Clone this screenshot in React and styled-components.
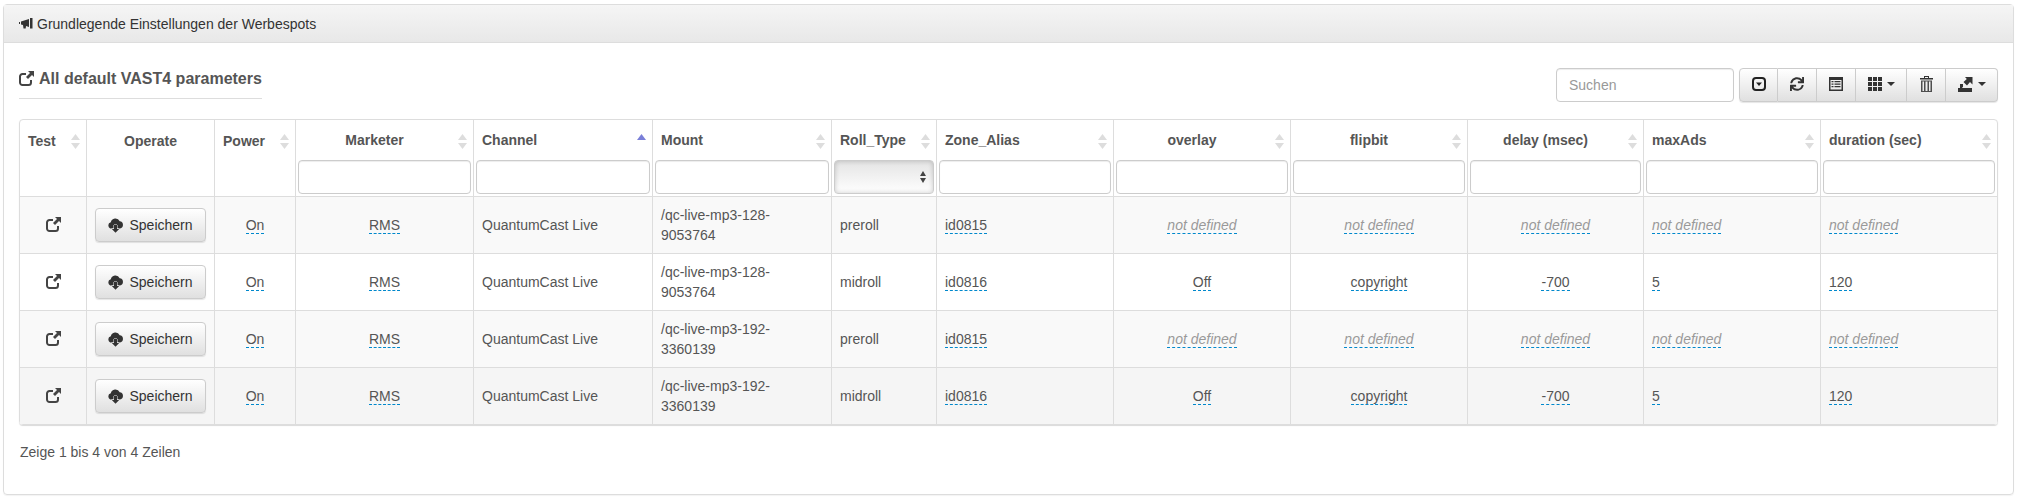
import React from "react"
import styled, { createGlobalStyle } from "styled-components"
import { FaSync } from "react-icons/fa"

const columns = [
	{ name: "Test", width: 66, sortable: true },
	{ name: "Operate", width: 128, center: true },
	{ name: "Power", width: 81, sortable: true },
	{ name: "Marketer", width: 178, center: true, sortable: true, filter: "text" },
	{ name: "Channel", width: 179, sortable: true, sorted: true, filter: "text" },
	{ name: "Mount", width: 179, sortable: true, filter: "text" },
	{ name: "Roll_Type", width: 105, sortable: true, filter: "select" },
	{ name: "Zone_Alias", width: 177, sortable: true, filter: "text" },
	{ name: "overlay", width: 177, center: true, sortable: true, filter: "text" },
	{ name: "flipbit", width: 177, center: true, sortable: true, filter: "text" },
	{ name: "delay (msec)", width: 176, center: true, sortable: true, filter: "text" },
	{ name: "maxAds", width: 177, sortable: true, filter: "text" },
	{ name: "duration (sec)", width: 177, sortable: true, filter: "text" },
]

const rows = [
	{ mount: ["/qc-live-mp3-128-", "9053764"], roll: "preroll", zone: "id0815" },
	{ mount: ["/qc-live-mp3-128-", "9053764"], roll: "midroll", zone: "id0816", overlay: "Off", flipbit: "copyright", delay: "-700", maxAds: "5", duration: "120" },
	{ mount: ["/qc-live-mp3-192-", "3360139"], roll: "preroll", zone: "id0815" },
	{ mount: ["/qc-live-mp3-192-", "3360139"], roll: "midroll", zone: "id0816", overlay: "Off", flipbit: "copyright", delay: "-700", maxAds: "5", duration: "120" },
]

function Editable({ value }) {
	if (value) return <EditLink>{value}</EditLink>
	return <EditLink $empty>not defined</EditLink>
}

function SortIcon({ active }) {
	return (
		<SortMark width="9" height="15" viewBox="0 0 9 15">
			<path d="M4.5 0 L9 6 H0 Z" fill={active ? "#7a7fd8" : "#ddd"} />
			{!active && <path d="M4.5 15 L9 9 H0 Z" fill="#ddd" />}
		</SortMark>
	)
}

// the icons below are drawn by hand, the packages only have the newer shapes
function BullhornIcon() {
	return (
		<svg width="14" height="11" viewBox="0 0 14 11" fill="#333">
			<path d="M0 4h1v2H0zM2 3.500 10 1v8L7 8.100 6.700 10.500H4.500L4 7 2 6.500z" />
			<rect x="11" y="0" width="2.500" height="10.500" />
		</svg>
	)
}

function ShareIcon() {
	return (
		<svg width="15" height="15" viewBox="0 0 15 15">
			<path d="M7 3H3.500A2.500 2.500 0 0 0 1 5.500v6A2.500 2.500 0 0 0 3.500 14h6a2.500 2.500 0 0 0 2.500-2.500V9" fill="none" stroke="#444" strokeWidth="2" />
			<path d="M9 0h6v6l-2-2-4 4-2-2 4-4z" fill="#444" />
		</svg>
	)
}

function CloudIcon() {
	return (
		<svg width="15" height="16" viewBox="0 0 15 16">
			<path d="M3.500 11.500a3.200 3.200 0 0 1-.7-6.300 4.700 4.700 0 0 1 8.900-1 3.700 3.700 0 0 1 .3 7.300z" fill="#333" />
			<path d="M6 8h3v4h2.200l-3.700 3.700L3.800 12H6z" fill="#333" stroke="#f2f2f2" strokeWidth="1" paintOrder="stroke" />
		</svg>
	)
}

function CaretSquareIcon() {
	return (
		<svg width="14" height="14" viewBox="0 0 14 14">
			<rect x="1" y="1" width="12" height="12" rx="3" fill="none" stroke="#222" strokeWidth="2" />
			<path d="M4 5.500h6L7 9z" fill="#222" />
		</svg>
	)
}

function ListIcon() {
	return (
		<svg width="14" height="14" viewBox="0 0 14 14" fill="#333">
			<path fillRule="evenodd" d="M0 0h14v14H0zM1.500 3v9.500h11V3z" />
			<path d="M2.500 4h2v1.200h-2zM5.500 4h6v1.200h-6zM2.500 6.500h2v1.200h-2zM5.500 6.500h6v1.200h-6zM2.500 9h2v1.200h-2zM5.500 9h6v1.200h-6z" />
		</svg>
	)
}

function GridIcon() {
	return (
		<svg width="14" height="14" viewBox="0 0 14 14" fill="#333">
			<path d="M0 0h4v4H0zM5 0h4v4H5zM10 0h4v4h-4zM0 5h4v4H0zM5 5h4v4H5zM10 5h4v4h-4zM0 10h4v4H0zM5 10h4v4H5zM10 10h4v4h-4z" />
		</svg>
	)
}

function TrashIcon() {
	return (
		<svg width="13" height="16" viewBox="0 0 13 16" fill="#333">
			<path d="M4 2V0h5v2h4v1.500H0V2zM5 2h3V1H5z" fillRule="evenodd" />
			<path fillRule="evenodd" d="M1 4.500h11V16H1zM2.500 5.500V15h1.500V5.500zM5.500 5.500V15h2V5.500zM9 5.500V15h1.500V5.500z" opacity="0.85" />
		</svg>
	)
}

function ExportIcon() {
	return (
		<svg width="15" height="16" viewBox="0 0 15 16">
			<rect x="0" y="12" width="14" height="4" fill="#333" />
			<path d="M2 8h3v2.500l-1 1.500H2z" fill="#333" />
			<path d="M7 1h7.500v7.500L12 6l-3 3.500L5.500 6 8.800 3z" fill="#333" />
		</svg>
	)
}

export default function App() {
	return (
		<Page>
			<GlobalStyle />
			<Panel>
				<PanelHeading>
					<BullhornIcon />
					<span>Grundlegende Einstellungen der Werbespots</span>
				</PanelHeading>
				<PanelBody>
					<Toolbar>
						<Title>
							<ShareIcon />
							All default VAST4 parameters
						</Title>
						<Tools>
							<SearchInput placeholder="Suchen" />
							<ButtonGroup>
								<ToolButton $w={39}><CaretSquareIcon /></ToolButton>
								<ToolButton $w={39}><FaSync size={14} /></ToolButton>
								<ToolButton $w={39}><ListIcon /></ToolButton>
								<ToolButton $w={51}><GridIcon /><Caret /></ToolButton>
								<ToolButton $w={39}><TrashIcon /></ToolButton>
								<ToolButton $w={52}><ExportIcon /><Caret /></ToolButton>
							</ButtonGroup>
						</Tools>
					</Toolbar>

					<Table>
						<colgroup>
							{columns.map((c) => <col key={c.name} style={{ width: c.width }} />)}
						</colgroup>
						<thead>
							<tr>
								{columns.map((c) => (
									<Th key={c.name} $center={c.center}>
										<ThLabel $filtered={c.filter} $shift={c.center && c.sortable}>{c.name}</ThLabel>
										{c.sortable && <SortIcon active={c.sorted} />}
										{c.filter === "text" && <FilterInput />}
										{c.filter === "select" && <FilterSelect><SelectArrows /></FilterSelect>}
									</Th>
								))}
							</tr>
						</thead>
						<tbody>
							{rows.map((r, i) => (
								<Row key={i} $index={i}>
									<Td $center><TestIcon><ShareIcon /></TestIcon></Td>
									<Td $center>
										<SaveButton><CloudIcon />Speichern</SaveButton>
									</Td>
									<Td $center><Editable value="On" /></Td>
									<Td $center><Editable value="RMS" /></Td>
									<Td>QuantumCast Live</Td>
									<Td>{r.mount[0]}<br />{r.mount[1]}</Td>
									<Td>{r.roll}</Td>
									<Td><Editable value={r.zone} /></Td>
									<Td $center><Editable value={r.overlay} /></Td>
									<Td $center><Editable value={r.flipbit} /></Td>
									<Td $center><Editable value={r.delay} /></Td>
									<Td><Editable value={r.maxAds} /></Td>
									<Td><Editable value={r.duration} /></Td>
								</Row>
							))}
						</tbody>
					</Table>
					<Summary>Zeige 1 bis 4 von 4 Zeilen</Summary>
				</PanelBody>
			</Panel>
		</Page>
	)
}

// Styled components
const GlobalStyle = createGlobalStyle`
	body {
		margin: 0;
		background: #fff;
		color: #555;
		font-family: "Liberation Sans", Arial, sans-serif;
		font-size: 14px;
		line-height: 20px;
	}
	* { box-sizing: border-box; }
`

const Page = styled.div`
	padding: 4px 3px;
`

const Panel = styled.div`
	height: 491px;
	border: 1px solid #ddd;
	border-radius: 4px;
	box-shadow: 0 1px 1px rgba(0, 0, 0, 0.05);
`

const PanelHeading = styled.div`
	display: flex;
	align-items: center;
	gap: 4px;
	height: 38px;
	padding: 0 15px;
	background: linear-gradient(to bottom, #f5f5f5, #e8e8e8);
	border-bottom: 1px solid #ddd;
	color: #333;
`

const PanelBody = styled.div`
	padding: 25px 15px 0;
`

const Toolbar = styled.div`
	display: flex;
	justify-content: space-between;
	align-items: flex-start;
	height: 51px;
`

const Title = styled.h4`
	display: flex;
	align-items: center;
	gap: 5px;
	margin: 0;
	height: 31px;
	padding-bottom: 9px;
	border-bottom: 1px solid #ddd;
	font-size: 16px;
	font-weight: bold;
	color: #555;
`

const Tools = styled.div`
	display: flex;
	gap: 5px;
`

const SearchInput = styled.input`
	width: 178px;
	height: 34px;
	padding: 6px 12px;
	border: 1px solid #ccc;
	border-radius: 4px;
	font: 14px "Liberation Sans", Arial, sans-serif;
	box-shadow: inset 0 1px 1px rgba(0, 0, 0, 0.075);
	&::placeholder { color: #999; }
`

const ButtonGroup = styled.div`
	display: flex;
	height: 34px;
	box-shadow: 0 1px 1px rgba(0, 0, 0, 0.1);
	border-radius: 4px;
`

const ToolButton = styled.div`
	display: flex;
	align-items: center;
	justify-content: center;
	gap: 5px;
	width: ${(p) => p.$w}px;
	height: 34px;
	padding-bottom: 2px;
	color: #333;
	background: linear-gradient(to bottom, #fff, #e0e0e0);
	border: 1px solid #ccc;
	border-left: 0;
	&:first-child {
		border-left: 1px solid #ccc;
		border-radius: 4px 0 0 4px;
	}
	&:last-child { border-radius: 0 4px 4px 0; }
`

const Caret = styled.span`
	width: 0;
	height: 0;
	border-top: 4px solid #333;
	border-left: 4px solid transparent;
	border-right: 4px solid transparent;
`

const Table = styled.table`
	width: 1979px;
	table-layout: fixed;
	border-collapse: separate;
	border-spacing: 0;
	border: 1px solid #ddd;
	border-radius: 4px;
	box-shadow: 0 1px 1px rgba(0, 0, 0, 0.15);
`

const Th = styled.th`
	position: relative;
	height: 76px;
	padding: 0;
	vertical-align: top;
	text-align: ${(p) => (p.$center ? "center" : "left")};
	border-left: 1px solid #ddd;
	&:first-child { border-left: 0; }
`

const ThLabel = styled.div`
	height: 40px;
	padding: ${(p) => (p.$filtered ? 10 : 11)}px ${(p) => (p.$shift ? 28 : 8)}px 0 8px;
	color: #555;
`

const SortMark = styled.svg`
	position: absolute;
	top: 14px;
	right: 6px;
`

const FilterInput = styled.input`
	display: block;
	width: calc(100% - 4px);
	height: 34px;
	margin-left: 2px;
	border: 1px solid #ccc;
	border-radius: 4px;
	background: #fff;
	box-shadow: inset 0 1px 1px rgba(0, 0, 0, 0.075);
`

const FilterSelect = styled.div`
	position: relative;
	width: calc(100% - 4px);
	height: 34px;
	margin-left: 2px;
	border: 1px solid #ccc;
	border-radius: 4px;
	background: linear-gradient(to bottom, #e4e4e4, #fff);
	box-shadow: inset 0 0 5px rgba(0, 0, 0, 0.2);
`

const SelectArrows = styled.span`
	position: absolute;
	top: 10px;
	right: 7px;
	width: 6px;
	height: 12px;
	&::before, &::after {
		content: "";
		position: absolute;
		left: 0;
		border-left: 3.5px solid transparent;
		border-right: 3.5px solid transparent;
	}
	&::before { top: 0; border-bottom: 5px solid #444; }
	&::after { bottom: 0; border-top: 5px solid #444; }
`

const Row = styled.tr`
	background: ${(p) => (p.$index === 3 ? "#f5f5f5" : p.$index % 2 === 0 ? "#f9f9f9" : "#fff")};
`

const Td = styled.td`
	height: 57px;
	padding: 8px;
	text-align: ${(p) => (p.$center ? "center" : "left")};
	border-left: 1px solid #ddd;
	border-top: 1px solid #ddd;
	&:first-child { border-left: 0; }
`

const TestIcon = styled.div`
	display: flex;
	justify-content: center;
	margin-top: -2px;
`

const SaveButton = styled.div`
	display: inline-flex;
	align-items: center;
	justify-content: center;
	gap: 6px;
	width: 111px;
	height: 34px;
	color: #333;
	background: linear-gradient(to bottom, #fff, #e0e0e0);
	border: 1px solid #ccc;
	border-radius: 4px;
	box-shadow: 0 1px 1px rgba(0, 0, 0, 0.1);
`

const EditLink = styled.span`
	border-bottom: 1px dashed #08c;
	color: ${(p) => (p.$empty ? "#999" : "#555")};
	font-style: ${(p) => (p.$empty ? "italic" : "normal")};
`

const Summary = styled.div`
	margin-top: 17px;
	padding-left: 1px;
`
